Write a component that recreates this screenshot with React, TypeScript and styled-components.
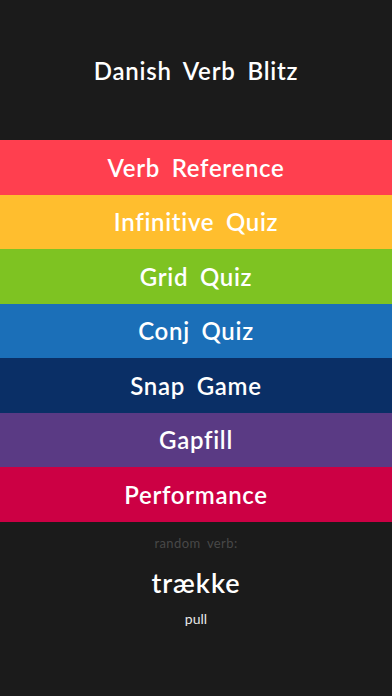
import React, { FC, Fragment } from 'react'
import styled, { createGlobalStyle } from 'styled-components'

interface BandProps {
  bg: string
}

const GlobalStyle = createGlobalStyle`
  html, body {
    margin: 0;
    padding: 0;
    background: #1b1b1b;
  }
  body {
    font-family: Lato, "Open Sans", sans-serif;
  }
`
const Screen = styled.div`
  width: 392px;
  height: 696px;
  background: #1b1b1b;
  display: flex;
  flex-direction: column;
  color: #ffffff;
`
const Header = styled.header`
  height: 140px;
  display: flex;
  align-items: center;
  justify-content: center;
`
const Title = styled.h1`
  margin: 0;
  font-size: 24px;
  font-weight: 600;
  letter-spacing: 0.8px;
  word-spacing: 5px;
`
const Menu = styled.nav`
  display: flex;
  flex-direction: column;
`
const Band = styled.div<BandProps>`
  height: 54.5px;
  background: ${(p) => p.bg};
  display: flex;
  align-items: center;
  justify-content: center;
  font-size: 24px;
  font-weight: 600;
  letter-spacing: 0.7px;
  word-spacing: 5px;
`
const Footer = styled.div`
  display: flex;
  flex-direction: column;
  align-items: center;
  padding-top: 13px;
`
const Label = styled.div`
  font-size: 13px;
  color: #484848;
  letter-spacing: 0.4px;
  word-spacing: 3px;
`
const Verb = styled.div`
  margin-top: 15px;
  font-size: 27px;
  font-weight: 600;
  letter-spacing: 1px;
`
const Meaning = styled.div`
  margin-top: 11px;
  font-size: 14px;
  color: #e8e8e8;
`

const items: [string, string][] = [
  ['Verb Reference', '#ff3f4f'],
  ['Infinitive Quiz', '#ffbe2e'],
  ['Grid Quiz', '#7ec322'],
  ['Conj Quiz', '#1b6fb8'],
  ['Snap Game', '#0a2f66'],
  ['Gapfill', '#5a3a84'],
  ['Performance', '#cc0044'],
]

const App: FC = () => {
  return (
    <Fragment>
      <GlobalStyle />
      <Screen>
        <Header>
          <Title>Danish Verb Blitz</Title>
        </Header>
        <Menu>
          {items.map(([label, bg]) => (
            <Band key={label} bg={bg}>
              {label}
            </Band>
          ))}
        </Menu>
        <Footer>
          <Label>random verb:</Label>
          <Verb>trække</Verb>
          <Meaning>pull</Meaning>
        </Footer>
      </Screen>
    </Fragment>
  )
}

export default App
